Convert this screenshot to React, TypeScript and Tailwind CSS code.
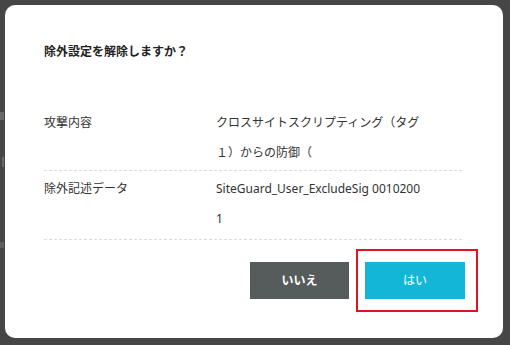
import React from "react";

const jp = { fontFamily: '"Noto Sans", "Noto Sans CJK JP", sans-serif' };

export default function App() {
  return (
    <div
      className="relative w-[510px] h-[345px] bg-[#464646] pt-[5px] pl-[5px] overflow-hidden"
      style={jp}
    >
      {/* faint background page fragments at left edge */}
      <div className="absolute left-0 top-[112px] w-[4px] h-[8px] bg-[#6a6a6a]" />
      <div className="absolute left-[2px] top-[157px] w-[2px] h-[10px] bg-[#6a6a6a]" />
      <div className="absolute left-0 top-[242px] w-[4px] h-[6px] bg-[#5e5e5e]" />

      <div className="w-[498px] h-[333px] bg-white rounded-[10px] pl-[39px] pr-[41px] pt-[38px] text-[#333333]">
        <h2 className="text-[12px] leading-[18px] font-bold text-[#222]">
          除外設定を解除しますか？
        </h2>

        <div className="mt-[43px] text-[12px]">
          <div className="flex pt-[4px] pb-[2px] border-b border-dashed border-[#dcdcdc]">
            <div className="w-[172px] leading-[30px]">攻撃内容</div>
            <div className="leading-[30px]">
              クロスサイトスクリプティング（タグ
              <br />
              １）からの防御（
            </div>
          </div>
          <div className="flex pt-[3px] pb-[5px] border-b border-dashed border-[#dcdcdc]">
            <div className="w-[172px] leading-[30px]">除外記述データ</div>
            <div className="leading-[30px]">
              SiteGuard_User_ExcludeSig 0010200
              <br />1
            </div>
          </div>
        </div>

        <div className="mt-[22px] -mr-[3px] flex justify-end gap-[16px]">
          <button className="w-[99px] h-[37px] bg-[#565b5c] text-white text-[12px] font-bold">
            いいえ
          </button>
          <div className="relative">
            <button className="w-[100px] h-[37px] bg-[#14b6d7] text-white text-[12px]">
              はい
            </button>
            <div className="absolute -left-[9px] -right-[13px] -top-[13px] -bottom-[13px] border-2 border-[#e0141e] pointer-events-none" />
          </div>
        </div>
      </div>
    </div>
  );
}
